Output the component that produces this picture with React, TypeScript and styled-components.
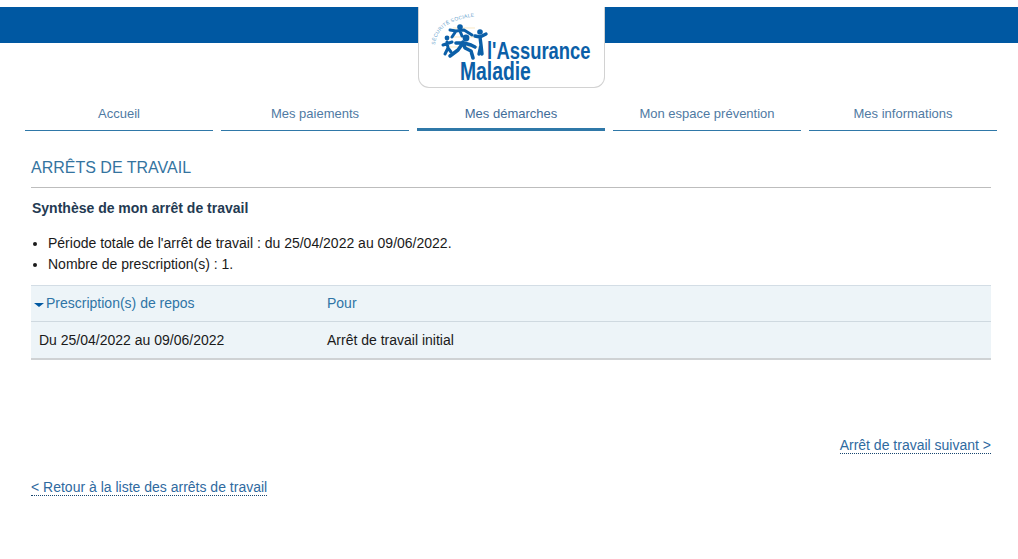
import React from 'react';
import styled, { createGlobalStyle } from 'styled-components';

const GlobalStyle = createGlobalStyle`
  html, body {
    margin: 0;
    padding: 0;
    background: #fff;
    font-family: "Liberation Sans", Arial, sans-serif;
    font-size: 14px;
    color: #1a1a1a;
  }
`;

const Page = styled.div`
  width: 1018px;
  height: 559px;
  overflow: hidden;
`;

const Header = styled.header`
  display: flex;
  justify-content: center;
  height: 88px;
  padding-left: 5px;
  background: linear-gradient(#fff 7px, #0058a2 7px, #0058a2 43px, #fff 43px);
`;

const LogoCard = styled.div`
  box-sizing: border-box;
  width: 187px;
  height: 81px;
  margin-top: 7px;
  background: #fff;
  border: 1px solid #d2d2d2;
  border-top: 0;
  border-radius: 0 0 11px 11px;
`;

const Nav = styled.nav`
  display: grid;
  grid-template-columns: repeat(5, 188px);
  gap: 8px;
  padding: 0 0 0 25px;
  margin-top: 13px;
`;

const NavItem = styled.a<{ $active?: boolean }>`
  box-sizing: border-box;
  height: 30px;
  padding-top: 5px;
  text-align: center;
  font-size: 13px;
  line-height: 15px;
  color: ${p => (p.$active ? '#3f6c99' : '#4f7aa3')};
  border-bottom: ${p => (p.$active ? '3px solid #2f78a8' : '1px solid #2f78a8')};
`;

const Main = styled.main`
  padding: 0 27px 0 31px;
`;

const Title = styled.h1`
  margin: 0;
  padding: 27px 0 9px;
  font-size: 16px;
  line-height: 20px;
  font-weight: 400;
  color: #34749f;
  border-bottom: 1px solid #bdbdbd;
`;

const Subtitle = styled.h2`
  margin: 12px 0 0 1px;
  font-size: 14px;
  line-height: 16px;
  font-weight: 700;
  color: #243a52;
`;

const Bullets = styled.ul`
  margin: 17px 0 0;
  padding: 0 0 0 17px;
  line-height: 21px;
`;

const Table = styled.div`
  margin-top: 10px;
  border-top: 1px solid #d3dde5;
  border-bottom: 2px solid #cfd2d4;
  background: #edf4f8;
`;

const Row = styled.div<{ $head?: boolean }>`
  display: grid;
  grid-template-columns: 296px 1fr;
  align-items: center;
  box-sizing: content-box;
  height: ${p => (p.$head ? '33px' : '36px')};
  padding-bottom: ${p => (p.$head ? '2px' : '0')};
  color: ${p => (p.$head ? '#2f74a6' : '#1a1a1a')};
  border-bottom: ${p => (p.$head ? '1px solid #cfd9e0' : '0')};
`;

const Cell = styled.div<{ $first?: boolean }>`
  display: flex;
  align-items: center;
  padding-left: ${p => (p.$first ? '8px' : '0')};
`;

const HeadCell = styled(Cell)`
  padding-left: 3px;
`;

const Caret = styled.span`
  width: 0;
  height: 0;
  margin: 4px 2px 0 0;
  border-left: 5px solid transparent;
  border-right: 5px solid transparent;
  border-top: 4px solid #0058a2;
`;

const NextRow = styled.div`
  display: flex;
  justify-content: flex-end;
  margin-top: 77px;
`;

const BackRow = styled.div`
  display: flex;
  margin-top: 25px;
`;

const TextLink = styled.a`
  line-height: 16px;
  color: #2f6a9f;
  border-bottom: 1px dotted #17456f;
`;

const Logo = () => (
  <svg width="185" height="80" viewBox="0 0 185 80">
    <defs>
      <path id="arc" d="M16 38 Q 18 12 62 9" fill="none" />
    </defs>
    <text fontFamily="Liberation Sans, sans-serif" fontSize="5" fill="#5d9ccb" letterSpacing="0.3">
      <textPath href="#arc">SÉCURITÉ SOCIALE</textPath>
    </text>
    <g stroke="#f3d9a0" strokeWidth="0.6">
      <line x1="34" y1="21" x2="56" y2="21" />
      <line x1="30" y1="30" x2="60" y2="30" />
      <line x1="28" y1="40" x2="60" y2="40" />
    </g>
    <g fill="#0b5fa8" stroke="#0b5fa8" strokeLinecap="round" strokeLinejoin="round">
      {/* small runner left */}
      <circle cx="28" cy="31" r="2.4" stroke="none" />
      <path d="M28 35 L29 41 M24 38 L33 35 M29 41 L26 47 M29 41 L32 45" strokeWidth="3" fill="none" />
      {/* upper leaping figure */}
      <circle cx="41" cy="20" r="2.8" stroke="none" />
      <path d="M33 30 L37 24 L45 23 L53 28 M37 24 L31 23 M41 24 L43 29" strokeWidth="3" fill="none" />
      {/* centre lunging figure */}
      <circle cx="47" cy="31" r="3.4" stroke="none" />
      <path d="M44 35 L46 41 L52 44 L54 51 M44 36 L39 43 L31 49 M45 36 L52 38 L56 40 M43 36 L37 36" strokeWidth="3.6" fill="none" />
      {/* right standing figure */}
      <circle cx="61" cy="25" r="2.8" stroke="none" />
      <path d="M61 30 L62 38 M62 38 L60 47 M62 38 L63 47 M56 29 L61 30 L67 27" strokeWidth="3.4" fill="none" />
    </g>
    <text transform="translate(68 51.5) scale(0.8 1)" fontFamily="Liberation Sans, sans-serif" fontWeight="700" fontSize="23" fill="#0b5fa8">l'Assurance</text>
    <text transform="translate(41 73) scale(0.773 1)" fontFamily="Liberation Sans, sans-serif" fontWeight="700" fontSize="25" fill="#0b5fa8">Maladie</text>
  </svg>
);

const navItems = ['Accueil', 'Mes paiements', 'Mes démarches', 'Mon espace prévention', 'Mes informations'];

export default function App() {
  return (
    <Page>
      <GlobalStyle />
      <Header>
        <LogoCard>
          <Logo />
        </LogoCard>
      </Header>
      <Nav>
        {navItems.map(item => (
          <NavItem key={item} $active={item === 'Mes démarches'}>{item}</NavItem>
        ))}
      </Nav>
      <Main>
        <Title>ARRÊTS DE TRAVAIL</Title>
        <Subtitle>Synthèse de mon arrêt de travail</Subtitle>
        <Bullets>
          <li>Période totale de l'arrêt de travail : du 25/04/2022 au 09/06/2022.</li>
          <li>Nombre de prescription(s) : 1.</li>
        </Bullets>
        <Table>
          <Row $head>
            <HeadCell><Caret />Prescription(s) de repos</HeadCell>
            <Cell>Pour</Cell>
          </Row>
          <Row>
            <Cell $first>Du 25/04/2022 au 09/06/2022</Cell>
            <Cell>Arrêt de travail initial</Cell>
          </Row>
        </Table>
        <NextRow>
          <TextLink>Arrêt de travail suivant &gt;</TextLink>
        </NextRow>
        <BackRow>
          <TextLink>&lt; Retour à la liste des arrêts de travail</TextLink>
        </BackRow>
      </Main>
    </Page>
  );
}
